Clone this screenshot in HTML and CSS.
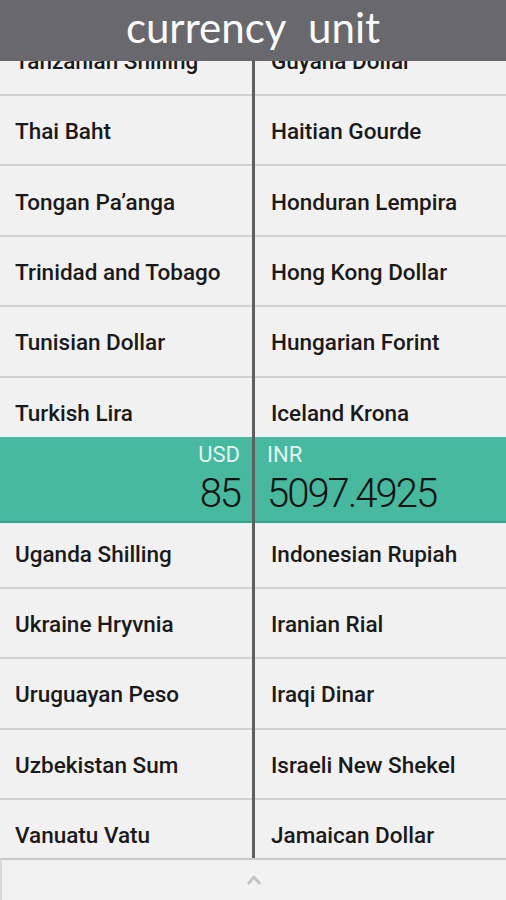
FILE: index.html
```html
<!DOCTYPE html>
<html lang="en">
<head>
  <meta charset="UTF-8">
  <title>Currency Unit</title>
  <link rel="stylesheet" href="styles.css">
</head>
<body>
  <div class="app">
    <header class="topbar">
      <h1 class="logo">currency unit</h1>
    </header>

    <main class="lists">
      <section class="col col-from">
        <ul class="list">
          <li class="row">Tanzanian Shilling</li>
          <li class="row">Thai Baht</li>
          <li class="row">Tongan Pa’anga</li>
          <li class="row">Trinidad and Tobago</li>
          <li class="row">Tunisian Dollar</li>
          <li class="row">Turkish Lira</li>
          <li class="row">US Dollar</li>
          <li class="row">Uganda Shilling</li>
          <li class="row">Ukraine Hryvnia</li>
          <li class="row">Uruguayan Peso</li>
          <li class="row">Uzbekistan Sum</li>
          <li class="row">Vanuatu Vatu</li>
          <li class="row">Venezuelan Bolivar</li>
        </ul>
        <div class="pick">
          <span class="code">USD</span>
          <span class="amount">85</span>
        </div>
      </section>

      <div class="divider"></div>

      <section class="col col-to">
        <ul class="list">
          <li class="row">Guyana Dollar</li>
          <li class="row">Haitian Gourde</li>
          <li class="row">Honduran Lempira</li>
          <li class="row">Hong Kong Dollar</li>
          <li class="row">Hungarian Forint</li>
          <li class="row">Iceland Krona</li>
          <li class="row">Indian Rupee</li>
          <li class="row">Indonesian Rupiah</li>
          <li class="row">Iranian Rial</li>
          <li class="row">Iraqi Dinar</li>
          <li class="row">Israeli New Shekel</li>
          <li class="row">Jamaican Dollar</li>
          <li class="row">Japanese Yen</li>
        </ul>
        <div class="pick">
          <span class="code">INR</span>
          <span class="amount">5097.4925</span>
        </div>
      </section>
    </main>

    <footer class="bottombar">
      <svg class="caret" width="16" height="12" viewBox="0 0 16 12">
        <path d="M2 10 L8 3 L14 10" fill="none" stroke="#c4c4c4" stroke-width="3" stroke-linejoin="round"/>
      </svg>
    </footer>
  </div>
</body>
</html>
```

FILE: styles.css
```css
body {
  margin: 0;
  font-family: Roboto, "Noto Sans", sans-serif;
  background-color: #f1f1f1;
  color: #1a1a1a;
}
.app {
  height: 900px;
  display: flex;
  flex-direction: column;
  overflow: hidden;
}
.topbar {
  height: 61px;
  flex: none;
  background-color: #69696d;
  display: flex;
  align-items: center;
  justify-content: center;
  position: relative;
  z-index: 2;
}
.logo {
  margin: 0;
  font-family: Lato, "Open Sans", sans-serif;
  font-weight: 400;
  font-size: 42px;
  word-spacing: 12px;
  color: #fafafa;
  line-height: 1;
  padding-bottom: 8px;
}
.lists {
  flex: 1;
  display: grid;
  grid-template-columns: 252px 3px 1fr;
  overflow: hidden;
}
.col {
  position: relative;
  overflow: hidden;
}
.list {
  list-style: none;
  margin: -35.4px 0 0 0;
  padding: 0;
}
.row {
  box-sizing: border-box;
  height: 70.4px;
  border-bottom: 2px solid #d2d2d2;
  display: flex;
  align-items: center;
  padding: 2px 0 0 15px;
  font-size: 22.5px;
  font-weight: 500;
  white-space: nowrap;
}
.col-to .row {
  padding-left: 16px;
}
.divider {
  background-color: #5f5f5f;
}
.pick {
  position: absolute;
  left: 0;
  right: 0;
  top: 376px;
  height: 86px;
  box-sizing: border-box;
  background-color: #46b99f;
  border-bottom: 2px solid #2ea88d;
  display: flex;
  flex-direction: column;
  padding: 5px 12px 0;
}
.col-from .pick {
  align-items: flex-end;
}
.col-to .pick {
  align-items: flex-start;
}
.code {
  font-size: 22px;
  color: #e4f6ef;
  line-height: 26px;
}
.amount {
  font-family: Roboto, sans-serif;
  font-weight: 300;
  font-size: 40px;
  letter-spacing: -2px;
  line-height: 44px;
  margin-top: 4px;
  color: #111;
}
.bottombar {
  height: 42px;
  flex: none;
  box-sizing: border-box;
  border-top: 2px solid #c9c9c9;
  border-left: 2px solid #dadada;
  background-color: #f2f2f2;
  display: flex;
  justify-content: center;
  padding-top: 14px;
}
```
